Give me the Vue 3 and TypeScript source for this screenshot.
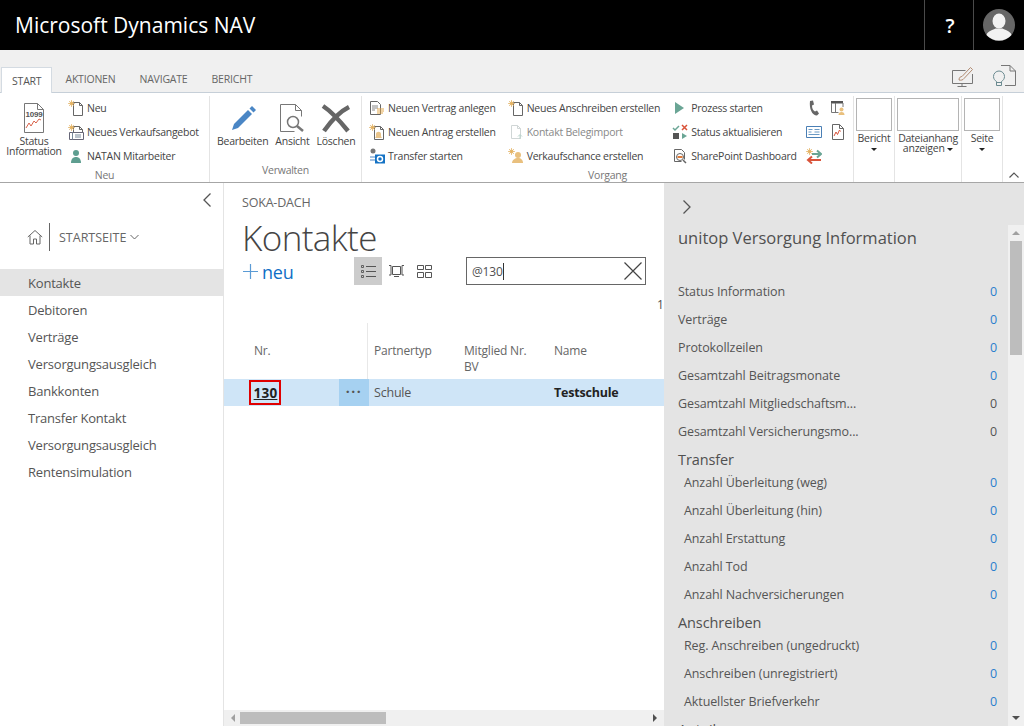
<template>
  <div class="page">
    <header class="topbar">
      <div class="brand">Microsoft Dynamics NAV</div>
      <div class="top-btn help">?</div>
      <div class="top-btn user">
        <svg width="32" height="32" viewBox="0 0 32 32">
          <circle cx="16" cy="16" r="16" fill="#666" />
          <ellipse cx="16" cy="12" rx="6.500" ry="7.500" fill="#f2f2f2" />
          <path d="M3.500 26c1-4 7-5.500 9-6.500h7c2 1 8 2.500 9 6.500-3 3.500-7.500 5.500-12.500 5.500S6.500 29.500 3.500 26z" fill="#f2f2f2" />
        </svg>
      </div>
    </header>

    <div class="tabband">
      <div v-for="(t, i) in tabs" :key="t" :class="['tab', { active: i === 0 }]">{{ t }}</div>
      <div class="tab-tools">
        <svg width="24" height="24" viewBox="0 0 24 24" fill="none" stroke="#777" stroke-width="1">
          <path d="M21.500 10v9.500h-20v-13h13M11 19.500v2.500M6.500 22.500h9" />
          <path d="M8 16c0-3 2-3.500 3-3.500l8.500-9 2 2-8.500 9c-1 1.500-3 2-5 1.500z" stroke="#b08a70" />
        </svg>
        <svg width="24" height="24" viewBox="0 0 24 24" fill="none" stroke="#777" stroke-width="1">
          <path d="M8 1.500h9l5.500 5.500v14.500H12" />
          <path d="M17 1.500V7h5.500" />
          <path d="M3.500 21.500v-4c-1.500-1-3-2.500-3-5a5.500 5.500 0 0 1 11 0c0 2.500-1.500 4-3 5v4h-5zM3.500 18.500h5" stroke="#6a8a90" />
        </svg>
      </div>
    </div>

    <section class="ribbon">
      <div class="rgroup" style="width: 210px">
        <div class="rbody">
          <div class="big wide">
            <svg class="big-ico" width="26" height="30" viewBox="0 0 26 30" fill="none">
              <path d="M3.500 .500h13l6 6v23h-19z" fill="#fff" stroke="#777" />
              <path d="M16.500 .500v6h6" stroke="#777" />
              <text x="13" y="14" font-size="8" font-weight="700" fill="#555" text-anchor="middle" font-family="Liberation Sans">1099</text>
              <path d="M5 25l3-5 2 3 3-5 2 2 3-4 2 1" stroke="#d9634a" />
            </svg>
            <span>Status<br />Information</span>
          </div>
          <div class="col">
            <div v-for="a in neuActions" :key="a.label" class="act">
              <span class="ico" v-html="icons[a.icon]"></span>{{ a.label }}
            </div>
          </div>
        </div>
        <div class="rlabel">Neu</div>
      </div>

      <div class="rgroup" style="width: 152px">
        <div class="rbody verw">
          <div class="big">
            <svg class="big-ico" width="28" height="30" viewBox="0 0 28 30">
              <path d="M3 27l2-6L19 7l4 4L9 25z" fill="#4a86c5" />
              <path d="M20.500 5.500l2.500-2.500 4 4-2.500 2.500z" fill="#4a86c5" />
            </svg>
            <span>Bearbeiten</span>
          </div>
          <div class="big">
            <svg class="big-ico" width="30" height="30" viewBox="0 0 30 30" fill="none" stroke="#777">
              <path d="M3.500 1.500h15l6 6v6M3.500 1.500v27h14M18.500 1.500v6h6" stroke-width="1" />
              <circle cx="16" cy="19" r="5.500" stroke-width="1.500" />
              <path d="M20 23l6 5" stroke-width="2.500" />
            </svg>
            <span>Ansicht</span>
          </div>
          <div class="big">
            <svg class="big-ico" width="30" height="30" viewBox="0 0 30 30" fill="none" stroke="#666" stroke-width="4.500">
              <path d="M2 3c9 6 17 15 25 25M28 4C18 9 10 18 3 28" />
            </svg>
            <span>Löschen</span>
          </div>
        </div>
        <div class="rlabel">Verwalten</div>
      </div>

      <div class="rgroup" style="width: 492px">
        <div class="rbody vorgang">
          <div v-for="(c, i) in vorgang" :key="i" class="col">
            <div v-for="a in c" :key="a.label" :class="['act', { off: a.off }]">
              <span class="ico" v-html="icons[a.icon]"></span>{{ a.label }}
            </div>
          </div>
          <div class="minis">
            <span v-for="m in minis" :key="m" class="ico mini" v-html="icons[m]"></span>
          </div>
        </div>
        <div class="rlabel">Vorgang</div>
      </div>

      <div v-for="g in dropGroups" :key="g.label" class="rgroup drop" :style="{ width: g.width + 'px' }">
        <div class="thumb" :style="{ width: g.thumb + 'px' }"></div>
        <div class="drop-label">
          <template v-if="g.second">{{ g.label }}<br />{{ g.second }} <i class="caret"></i></template>
          <template v-else>{{ g.label }}<br /><i class="caret"></i></template>
        </div>
      </div>

      <div class="collapse">
        <svg width="10" height="6" viewBox="0 0 10 6" fill="none" stroke="#555" stroke-width="1.200"><path d="M.500 5.500L5 1l4.500 4.500" /></svg>
      </div>
    </section>

    <div class="content">
      <nav class="nav">
        <div class="nav-back">
          <svg width="10" height="16" viewBox="0 0 10 16" fill="none" stroke="#555" stroke-width="1.300"><path d="M8.500 1.500L2 8l6.500 6.500" /></svg>
        </div>
        <div class="nav-home">
          <svg width="16" height="16" viewBox="0 0 16 16" fill="none" stroke="#666"><path d="M.800 8L8 1.500 15.200 8M3 6.500v8.500h3.500v-5h3v5H13V6.500" /></svg>
          <span class="nav-sep"></span>
          <span class="nav-title">STARTSEITE</span>
          <svg width="9" height="6" viewBox="0 0 9 6" fill="none" stroke="#666"><path d="M.500 1l4 4 4-4" /></svg>
        </div>
        <div v-for="(n, i) in navItems" :key="i" :class="['nav-item', { active: i === 0 }]">{{ n }}</div>
      </nav>

      <main class="main">
        <div class="main-inner">
          <div class="crumb">SOKA-DACH</div>
          <h1 class="title">Kontakte</h1>
          <div class="toolbar">
            <div class="new">
              <svg width="15" height="15" viewBox="0 0 15 15" stroke="#5b9bd5" stroke-width="1.200"><path d="M7.500 0v15M0 7.500h15" /></svg>
              <span>neu</span>
            </div>
            <div class="views">
              <div class="view active">
                <svg width="15" height="13" viewBox="0 0 15 13" fill="none" stroke="#555"><path d="M5 1.500h10M5 6.500h10M5 11.500h10" /><path d="M.500 .500h2v2h-2zM.500 5.500h2v2h-2zM.500 10.500h2v2h-2z" stroke-width=".9" /></svg>
              </div>
              <div class="view">
                <svg width="15" height="12" viewBox="0 0 15 12" fill="none" stroke="#555"><path d="M3.500 1.500h8v8h-8zM0 .500h2v9.500H0M15 .500h-2v9.500h2M5 11.500h5" /></svg>
              </div>
              <div class="view">
                <svg width="15" height="13" viewBox="0 0 15 13" fill="none" stroke="#555"><path d="M.500 .500h6v4h-6zM8.500 .500h6v4h-6zM.500 7.500h6v5h-6zM8.500 7.500h6v5h-6z" /></svg>
              </div>
            </div>
            <div class="search">
              <span class="q">@130</span><span class="cursor"></span>
              <svg class="clear" width="18" height="18" viewBox="0 0 18 18" stroke="#444" stroke-width="1.200"><path d="M.500 .500l17 17M17.500 .500l-17 17" /></svg>
            </div>
          </div>
          <div class="count">1</div>
          <div class="thead">
            <div class="c-nr">Nr.</div>
            <div class="c-type">Partnertyp</div>
            <div class="c-mg">Mitglied Nr.<br />BV</div>
            <div class="c-name">Name</div>
          </div>
          <div class="trow">
            <div class="c-nr"><a class="nr-link">130</a></div>
            <div class="more">···</div>
            <div class="c-type">Schule</div>
            <div class="c-mg"></div>
            <div class="c-name"><b>Testschule</b></div>
          </div>
        </div>
        <div class="hscroll">
          <i class="tri left"></i>
          <div class="hthumb"></div>
          <i class="tri right"></i>
        </div>
      </main>

      <aside class="side">
        <div class="side-inner">
          <svg class="side-fwd" width="10" height="16" viewBox="0 0 10 16" fill="none" stroke="#555" stroke-width="1.300"><path d="M1.500 1.500L8 8l-6.500 6.500" /></svg>
          <div class="side-title">unitop Versorgung Information</div>
          <template v-for="s in sideSections" :key="s.head">
            <div v-if="s.head" class="side-head">{{ s.head }}</div>
            <div v-for="r in s.rows" :key="r.label" :class="['side-row', { sub: !!s.head }]">
              <span>{{ r.label }}</span>
              <span :class="['val', { plain: r.plain }]">0</span>
            </div>
          </template>
        </div>
        <div class="vscroll">
          <i class="tri up"></i>
          <div class="vthumb"></div>
          <i class="tri down"></i>
        </div>
      </aside>
    </div>
  </div>
</template>

<script setup lang="ts">
interface Action {
  label: string
  icon: string
  off?: boolean
}

const tabs = ['START', 'AKTIONEN', 'NAVIGATE', 'BERICHT']

const spark = '<circle cx="3.500" cy="3.500" r="2" fill="#eec98a"/><path d="M3.500 0v7M0 3.500h7M1 1l5 5M6 1L1 6" stroke="#e3b060" stroke-width=".7"/>'
const page = '<path d="M5.500 2.500h6l3 3v10h-9z" fill="#fff" stroke="#666"/><path d="M11.500 2.500v3h3" fill="none" stroke="#666"/>'

const icons: Record<string, string> = {
  neu: `<svg width="16" height="16" viewBox="0 0 16 16">${page}${spark}</svg>`,
  angebot: `<svg width="16" height="16" viewBox="0 0 16 16">${page}${spark}<path d="M1.500 8.500h14v7h-14z" fill="#fff" stroke="#667"/><path d="M4.500 8.500v7M7 11h6M7 13h6" stroke="#789" /></svg>`,
  natan: '<svg width="16" height="16" viewBox="0 0 16 16"><circle cx="8" cy="5" r="3" fill="#5e9e90"/><path d="M3 15c0-4 2-6 5-6s5 2 5 6z" fill="#5e9e90"/></svg>',
  vertrag: '<svg width="16" height="16" viewBox="0 0 16 16" fill="none"><path d="M1.500 1.500h7l3 3v10h-10z" fill="#fff" stroke="#666"/><path d="M3 6h6M3 8h6M3 10h3" stroke="#888"/><path d="M8 9h7M8 11h7M8 13h6" stroke="#e3a94f"/></svg>',
  antrag: `<svg width="16" height="16" viewBox="0 0 16 16">${page}${spark}<path d="M6 14c1-1 1-2 1-4 0-3 5-3 5 0 0 2 0 3 1 4z" fill="#e9c48a"/></svg>`,
  transfer: '<svg width="16" height="16" viewBox="0 0 16 16"><circle cx="4" cy="3" r="2.500" fill="#777"/><path d="M1 9h5M6 12H1" stroke="#4a86c5" fill="none"/><path d="M6 6.500h10v9H6z" fill="#1472c4"/><circle cx="11" cy="11" r="2.500" fill="none" stroke="#fff" stroke-width="1.500"/></svg>',
  anschreiben: `<svg width="16" height="16" viewBox="0 0 16 16">${page}${spark}</svg>`,
  beleg: '<svg width="16" height="16" viewBox="0 0 16 16" fill="none"><path d="M3.500 1.500h6l3 3v10h-9z" stroke="#d0d6d6"/><path d="M9.500 1.500v3h3" stroke="#d0d6d6"/><path d="M12 15v-4M10 12.500l2-2 2 2" stroke="#b9d4cc"/></svg>',
  chance: `<svg width="16" height="16" viewBox="0 0 16 16">${spark}<circle cx="10" cy="7" r="3" fill="#e9c07e"/><path d="M4 15c0-3 3-5 6-5s5 2 5 5z" fill="#e9c07e"/></svg>`,
  prozess: '<svg width="16" height="16" viewBox="0 0 16 16"><path d="M3 2l9 6-9 6z" fill="#6aa595"/></svg>',
  status: '<svg width="16" height="16" viewBox="0 0 16 16" fill="none"><path d="M1 4l2 2 4-4" stroke="#6aa595" stroke-width="1.500"/><path d="M10 1l5 5M15 1l-5 5" stroke="#d9533a" stroke-width="1.500"/><path d="M1 9h6v6H1z" fill="#555"/><path d="M10 9l5 3-5 3z" fill="#6aa595"/></svg>',
  sharepoint: '<svg width="16" height="16" viewBox="0 0 16 16" fill="none"><path d="M2.500 1.500h7l3 3v7" stroke="#666"/><path d="M2.500 1.500v12h7" stroke="#666"/><circle cx="8" cy="9" r="3.500" stroke="#666"/><path d="M5.500 9h5" stroke="#e07b39" stroke-width="2"/><path d="M11 12l3 3" stroke="#666" stroke-width="1.500"/></svg>',
  phone: '<svg width="16" height="16" viewBox="0 0 16 16"><path d="M4 1l3-.500 1 4-2 1c0 3 1 5 3 6l2-1 2 3-2 2c-5 0-8-7-7-14.500z" fill="#666"/></svg>',
  table: '<svg width="16" height="16" viewBox="0 0 16 16" fill="none"><path d="M1 1h12v2.500H1z" fill="#555"/><path d="M1.500 3v9.500h7M5.500 3v9.500M13 3v4" stroke="#777"/><circle cx="11.500" cy="9.500" r="2" fill="#e9c07e"/><path d="M8.500 15c0-2 1-3 3-3s3 1 3 3z" fill="#e9c07e"/></svg>',
  card: '<svg width="16" height="16" viewBox="0 0 16 16" fill="none"><path d="M.500 2.500h15v11H.500z" stroke="#4a7fb5"/><path d="M2.500 5.500h4M2.500 8h3M2.500 10.500h11M8.500 5.500h5M8.500 8h5" stroke="#6a9ac5"/></svg>',
  chart: '<svg width="16" height="16" viewBox="0 0 16 16" fill="none"><path d="M2.500 .500h7l4 4v11h-11z" stroke="#666"/><path d="M9.500 .500v4h4" stroke="#666"/><path d="M4 12l2-4 1.500 2.500L9.500 6l1 1.500" stroke="#d9533a"/></svg>',
  swap: `<svg width="16" height="16" viewBox="0 0 16 16" fill="none">${spark}<path d="M6 6h8M11 2.500L15 6l-4 3.500" stroke="#6aa595" stroke-width="2"/><path d="M15 12H3M6 8.500L2 12l4 3.500" stroke="#d9533a" stroke-width="2"/></svg>`,
}

const neuActions: Action[] = [
  { label: 'Neu', icon: 'neu' },
  { label: 'Neues Verkaufsangebot', icon: 'angebot' },
  { label: 'NATAN Mitarbeiter', icon: 'natan' },
]

const vorgang: Action[][] = [
  [
    { label: 'Neuen Vertrag anlegen', icon: 'vertrag' },
    { label: 'Neuen Antrag erstellen', icon: 'antrag' },
    { label: 'Transfer starten', icon: 'transfer' },
  ],
  [
    { label: 'Neues Anschreiben erstellen', icon: 'anschreiben' },
    { label: 'Kontakt Belegimport', icon: 'beleg', off: true },
    { label: 'Verkaufschance erstellen', icon: 'chance' },
  ],
  [
    { label: 'Prozess starten', icon: 'prozess' },
    { label: 'Status aktualisieren', icon: 'status' },
    { label: 'SharePoint Dashboard', icon: 'sharepoint' },
  ],
]

const minis = ['phone', 'table', 'card', 'chart', 'swap']

const dropGroups = [
  { label: 'Bericht', second: '', width: 41, thumb: 36 },
  { label: 'Dateianhang', second: 'anzeigen', width: 67, thumb: 62 },
  { label: 'Seite', second: '', width: 41, thumb: 36 },
]

const navItems = [
  'Kontakte',
  'Debitoren',
  'Verträge',
  'Versorgungsausgleich',
  'Bankkonten',
  'Transfer Kontakt',
  'Versorgungsausgleich',
  'Rentensimulation',
]

const sideSections = [
  {
    head: '',
    rows: [
      { label: 'Status Information' },
      { label: 'Verträge' },
      { label: 'Protokollzeilen' },
      { label: 'Gesamtzahl Beitragsmonate' },
      { label: 'Gesamtzahl Mitgliedschaftsm...', plain: true },
      { label: 'Gesamtzahl Versicherungsmo...', plain: true },
    ],
  },
  {
    head: 'Transfer',
    rows: [
      { label: 'Anzahl Überleitung (weg)' },
      { label: 'Anzahl Überleitung (hin)' },
      { label: 'Anzahl Erstattung' },
      { label: 'Anzahl Tod' },
      { label: 'Anzahl Nachversicherungen' },
    ],
  },
  {
    head: 'Anschreiben',
    rows: [
      { label: 'Reg. Anschreiben (ungedruckt)' },
      { label: 'Anschreiben (unregistriert)' },
      { label: 'Aktuellster Briefverkehr' },
    ],
  },
  { head: 'Anteile', rows: [] },
]
</script>

<style>
html,
body {
  margin: 0;
  height: 726px;
  overflow: hidden;
  background: #fff;
}
</style>

<style scoped>
.page {
  width: 1024px;
  height: 726px;
  display: flex;
  flex-direction: column;
  overflow: hidden;
  font-family: "Open Sans", "Noto Sans", sans-serif;
  font-size: 12px;
  color: #505050;
  letter-spacing: -0.2px;
}

.topbar {
  height: 50px;
  flex: none;
  background: #000;
  color: #fff;
  display: flex;
  align-items: stretch;
}
.brand {
  flex: 1;
  padding-left: 15px;
  font-size: 21px;
  line-height: 50px;
  letter-spacing: 0;
}
.top-btn {
  width: 49px;
  border-left: 1px solid #4a4a4a;
  display: flex;
  align-items: center;
  justify-content: center;
}
.help {
  font-size: 20px;
  font-weight: 600;
  padding-left: 2px;
  box-sizing: border-box;
}
.user {
  width: 50px;
}

.tabband {
  height: 43px;
  flex: none;
  background: #f0f0f0;
  border-bottom: 1px solid #c6cfd8;
  box-sizing: border-box;
  display: flex;
  align-items: flex-end;
  padding-left: 1px;
}
.tab {
  height: 25px;
  line-height: 24px;
  padding: 0 10px;
  margin-right: 4px;
  font-size: 10.500px;
  color: #666;
}
.tab.active {
  background: #fff;
  border: 1px solid #d4dbe2;
  border-bottom: 0;
  height: 26px;
  margin-bottom: -1px;
  box-sizing: border-box;
  line-height: 26px;
  color: #555;
  margin-right: 3px;
}
.tab-tools {
  margin-left: auto;
  display: flex;
  gap: 18px;
  padding: 0 7px 4px 0;
}

.ribbon {
  height: 90px;
  flex: none;
  box-sizing: border-box;
  border-bottom: 1px solid #a6a6a6;
  display: flex;
  background: #fff;
  font-size: 10.500px;
  letter-spacing: -0.25px;
}
.rgroup {
  flex: none;
  box-sizing: border-box;
  border-right: 1px solid #e4e4e4;
  margin-top: 3px;
  display: flex;
  flex-direction: column;
}
.rbody {
  flex: 1;
  display: flex;
}
.rlabel {
  text-align: center;
  height: 19px;
  line-height: 15px;
  color: #777;
}
.col {
  display: flex;
  flex-direction: column;
}
.act {
  height: 24px;
  display: flex;
  align-items: center;
  gap: 3px;
  white-space: nowrap;
  color: #444;
}
.act.off {
  color: #888;
}
.ico {
  width: 16px;
  height: 16px;
  flex: none;
  display: block;
}
.big {
  display: flex;
  flex-direction: column;
  align-items: center;
  line-height: 10px;
  text-align: center;
  color: #444;
  padding-top: 7px;
}
.big-ico {
  margin-bottom: 3px;
}
.big.wide {
  width: 68px;
  flex: none;
}
.verw {
  padding-left: 7px;
  gap: 7px;
}
.verw .big span {
  white-space: nowrap;
}
.vorgang {
  padding-left: 7px;
  gap: 12px;
}
.minis {
  display: grid;
  grid-template-columns: 16px 16px;
  grid-auto-rows: 24px;
  column-gap: 8px;
  align-items: center;
  margin-left: -3px;
}
.drop {
  align-items: center;
  padding-top: 2px;
}
.thumb {
  height: 33px;
  box-sizing: border-box;
  border: 1px solid #b4b4b4;
  flex: none;
}
.drop-label {
  text-align: center;
  line-height: 10px;
  margin-top: 2px;
  color: #444;
  white-space: nowrap;
}
.caret {
  display: inline-block;
  width: 0;
  height: 0;
  border: 3px solid transparent;
  border-top: 3px solid #222;
  border-bottom: 0;
  vertical-align: middle;
}
.collapse {
  flex: 1;
  display: flex;
  align-items: flex-end;
  justify-content: center;
  padding-bottom: 4px;
}

.content {
  flex: 1;
  min-height: 0;
  display: flex;
}
.nav {
  width: 224px;
  flex: none;
  box-sizing: border-box;
  border-right: 1px solid #e4e4e4;
  font-size: 13px;
}
.nav-back {
  height: 34px;
  display: flex;
  justify-content: flex-end;
  align-items: center;
  padding-right: 11px;
}
.nav-home {
  height: 40px;
  margin-bottom: 12px;
  padding-left: 27px;
  display: flex;
  align-items: center;
  gap: 6px;
}
.nav-sep {
  width: 1px;
  height: 28px;
  background: #666;
  margin-right: 3px;
}
.nav-title {
  font-size: 12.500px;
  color: #666;
  letter-spacing: 0;
  margin-right: -2px;
}
.nav-item {
  height: 27px;
  line-height: 28px;
  padding-left: 28px;
  color: #555;
}
.nav-item.active {
  background: #e4e4e4;
}

.main {
  width: 440px;
  flex: none;
  display: flex;
  flex-direction: column;
  overflow: hidden;
}
.main-inner {
  flex: 1;
  min-height: 0;
}
.crumb {
  padding: 11px 0 0 18px;
  line-height: 18px;
  font-size: 12.500px;
  color: #666;
}
.title {
  margin: 3px 0 0;
  padding-left: 18px;
  font-size: 35px;
  font-weight: 300;
  line-height: 45px;
  color: #444;
  letter-spacing: -0.6px;
}
.toolbar {
  height: 28px;
  display: flex;
  align-items: center;
  margin-top: -3px;
  padding-left: 19px;
}
.new {
  width: 111px;
  display: flex;
  align-items: center;
  gap: 4px;
  font-size: 18px;
  color: #0f6fc6;
  padding-top: 1px;
}
.views {
  display: flex;
  width: 112px;
}
.view {
  width: 28px;
  height: 28px;
  display: flex;
  align-items: center;
  justify-content: center;
}
.view.active {
  background: #ccc;
}
.search {
  width: 180px;
  height: 28px;
  box-sizing: border-box;
  border: 1px solid #666;
  display: flex;
  align-items: center;
  padding-left: 5px;
  position: relative;
  font-size: 12px;
}
.cursor {
  width: 1px;
  height: 17px;
  background: #333;
}
.clear {
  position: absolute;
  right: 3px;
  top: 4px;
}
.count {
  height: 25px;
  line-height: 26px;
  padding-left: 433px;
  white-space: nowrap;
  font-size: 12px;
  margin-top: 7px;
}
.thead {
  height: 56px;
  display: flex;
  position: relative;
  margin-top: 6px;
  padding-top: 20px;
  box-sizing: border-box;
  line-height: 16px;
  color: #666;
}
.thead::after {
  content: "";
  position: absolute;
  left: 143px;
  top: 0;
  bottom: 0;
  width: 1px;
  background: #e8e8e8;
}
.c-nr {
  width: 115px;
  padding-left: 30px;
  flex: none;
}
.thead .c-type {
  margin-left: 5px;
}
.c-type {
  width: 90px;
  flex: none;
}
.c-mg {
  width: 90px;
  flex: none;
}
.trow {
  height: 27px;
  background: #cfe5f7;
  display: flex;
  align-items: center;
  color: #555;
  font-size: 12.500px;
}
.trow .c-nr {
  width: 85px;
  padding-left: 25px;
  height: 25px;
  display: flex;
  align-items: center;
}
.nr-link {
  width: 32px;
  height: 25px;
  box-sizing: border-box;
  border: 2px solid #e00000;
  text-align: center;
  line-height: 23px;
  font-size: 13.500px;
  font-weight: 700;
  color: #222;
  text-decoration: underline;
  padding-left: 1px;
  letter-spacing: 0.2px;
}
.more {
  width: 30px;
  height: 27px;
  margin: 0 5px;
  background: #a6d1f1;
  text-align: center;
  line-height: 25px;
  font-weight: 700;
  font-size: 14px;
  letter-spacing: 1.500px;
}
.trow b {
  color: #222;
}
.hscroll {
  height: 16px;
  flex: none;
  background: #f0f0f0;
  display: flex;
  align-items: center;
  padding: 0 7px;
  gap: 5px;
}
.hthumb {
  width: 146px;
  height: 12px;
  background: #bdbdbd;
}
.tri {
  display: block;
  width: 0;
  height: 0;
  border: 4px solid transparent;
}
.tri.left {
  border-left: 0;
  border-right: 4px solid #a0a0a0;
}
.tri.right {
  margin-left: auto;
  border-right: 0;
  border-left: 4px solid #505050;
}

.side {
  flex: 1;
  background: #e4e4e4;
  display: flex;
  overflow: hidden;
  font-size: 12.500px;
  letter-spacing: -0.1px;
}
.side-inner {
  flex: 1;
  padding: 16px 11px 0 14px;
  min-width: 0;
}
.side-fwd {
  display: block;
  margin-left: 4px;
}
.side-title {
  font-size: 16.500px;
  color: #505050;
  margin-top: 11px;
  line-height: 24px;
  margin-bottom: 28px;
  letter-spacing: 0;
}
.side-row {
  height: 28px;
  line-height: 28px;
  display: flex;
  justify-content: space-between;
  color: #555;
  white-space: nowrap;
}
.side-row.sub {
  padding-left: 6px;
}
.side-head {
  font-size: 14.500px;
  height: 23px;
  line-height: 28px;
  color: #505050;
}
.val {
  color: #2b7fce;
}
.val.plain {
  color: #555;
}
.vscroll {
  width: 16px;
  flex: none;
  background: #f0f0f0;
  margin-top: 42px;
  display: flex;
  flex-direction: column;
  align-items: center;
  padding: 6px 0;
  box-sizing: border-box;
  gap: 6px;
}
.vthumb {
  width: 12px;
  height: 114px;
  background: #bdbdbd;
}
.tri.up {
  border-top: 0;
  border-bottom: 4px solid #a0a0a0;
}
.tri.down {
  margin-top: auto;
  border-bottom: 0;
  border-top: 4px solid #505050;
}
</style>
